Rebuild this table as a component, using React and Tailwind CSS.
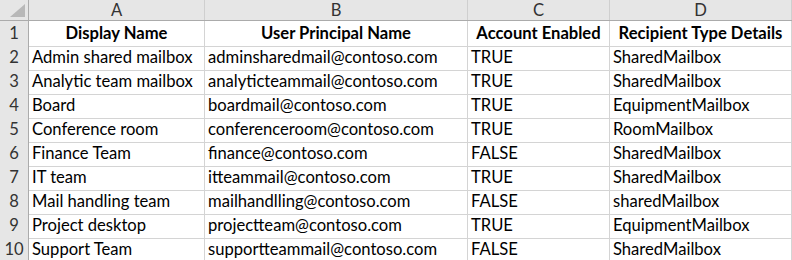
import React from 'react';

const columns = ['A', 'B', 'C', 'D'];

const headers = ['Display Name', 'User Principal Name', 'Account Enabled', 'Recipient Type Details'];

const rows = [
  ['Admin shared mailbox', 'adminsharedmail@contoso.com', 'TRUE', 'SharedMailbox'],
  ['Analytic team mailbox', 'analyticteammail@contoso.com', 'TRUE', 'SharedMailbox'],
  ['Board', 'boardmail@contoso.com', 'TRUE', 'EquipmentMailbox'],
  ['Conference room', 'conferenceroom@contoso.com', 'TRUE', 'RoomMailbox'],
  ['Finance Team', 'finance@contoso.com', 'FALSE', 'SharedMailbox'],
  ['IT team', 'itteammail@contoso.com', 'TRUE', 'SharedMailbox'],
  ['Mail handling team', 'mailhandlling@contoso.com', 'FALSE', 'sharedMailbox'],
  ['Project desktop', 'projectteam@contoso.com', 'TRUE', 'EquipmentMailbox'],
  ['Support Team', 'supportteammail@contoso.com', 'FALSE', 'SharedMailbox'],
];

const gridCols = 'grid grid-cols-[29px_176px_263px_142px_1fr]';

const App = () => {
  return (
    <div
      className="w-[792px] h-[260px] overflow-hidden bg-white text-[16.6px] text-black"
      style={{ fontFamily: 'Lato, "Noto Sans", sans-serif' }}
    >
      {/* column letters */}
      <div className={`${gridCols} h-[21px] bg-[#e6e6e6] border-b border-[#ababab]`}>
        <div className="relative border-r border-[#ababab]">
          <div className="absolute right-[3px] bottom-[3px] w-0 h-0 border-l-[15px] border-l-transparent border-b-[13px] border-b-[#b8b8b8]" />
        </div>
        {columns.map((c) => (
          <div
            key={c}
            className="flex items-center justify-center border-r border-[#cfcfcf] text-[#333] leading-none"
          >
            {c}
          </div>
        ))}
      </div>

      {/* header row */}
      <div className={`${gridCols} h-[24px]`}>
        <div className="flex items-center justify-center bg-[#e6e6e6] border-r border-b border-[#ababab] text-[#333]">
          1
        </div>
        {headers.map((h) => (
          <div
            key={h}
            className="flex items-center justify-center border-r border-b border-[#d4d4d4] font-bold whitespace-nowrap overflow-hidden"
          >
            {h}
          </div>
        ))}
      </div>

      {/* data rows */}
      {rows.map((row, i) => (
        <div key={i} className={`${gridCols} h-[24px]`}>
          <div className="flex items-center justify-center bg-[#e6e6e6] border-r border-b border-[#ababab] text-[#333]">
            {i + 2}
          </div>
          {row.map((cell, j) => (
            <div
              key={j}
              className="flex items-center pl-[3px] border-r border-b border-[#d4d4d4] whitespace-nowrap overflow-hidden"
            >
              {cell}
            </div>
          ))}
        </div>
      ))}
    </div>
  );
};

export default App;
